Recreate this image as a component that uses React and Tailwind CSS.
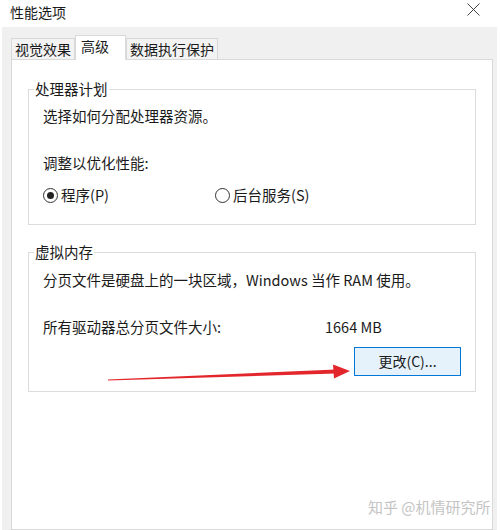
import { useState } from 'react';

const font = "font-['Microsoft_YaHei','Noto_Sans_CJK_SC',sans-serif]";

const Radio = ({ checked, label, onSelect, className = '' }) => (
  <button type="button" onClick={onSelect} className={`flex items-center gap-[3px] h-[20px] ${className}`}>
    <span className="w-[15px] h-[15px] rounded-full border border-[#333] bg-white flex items-center justify-center">
      {checked && <span className="w-[7px] h-[7px] rounded-full bg-[#222]" />}
    </span>
    <span>{label}</span>
  </button>
);

const Group = ({ title, className = '', children }) => (
  <fieldset className={`border border-[#dcdcdc] px-[14px] ${className}`}>
    <legend className="-ml-[9px] px-[1px] leading-[16px]">{title}</legend>
    {children}
  </fieldset>
);

export default function App() {
  const [mode, setMode] = useState('program');
  const tabs = ['视觉效果', '高级', '数据执行保护'];
  const [active, setActive] = useState(1);

  return (
    <div className={`relative w-[500px] h-[530px] overflow-hidden bg-white text-[#1a1a1a] text-[14.5px] ${font}`}>
      {/* Title bar */}
      <div className="h-[27px] flex items-center justify-between pl-[10px] pr-[20px]">
        <span className="text-[14px] leading-[16px] -mt-[3px]">性能选项</span>
        <svg width="13" height="13" viewBox="0 0 13 13" className="-mt-[8px]">
          <path d="M0.5 0.5L12.5 12.5M12.5 0.5L0.5 12.5" stroke="#444" strokeWidth="1" />
        </svg>
      </div>

      {/* Dialog body */}
      <div className="ml-[2px] w-[495px] h-[503px] bg-[#f0f0f0] pl-[9px] pr-[4px] pt-[8px] flex flex-col">
        <div className="flex items-end h-[24px] text-[14px] whitespace-nowrap">
          {tabs.map((t, i) =>
            i === active ? (
              <button
                key={t}
                type="button"
                className="relative z-10 -mb-px h-[25px] pl-[5px] pr-[16px] bg-white border border-b-0 border-[#d9d9d9] leading-[20px] pb-[4px]"
              >
                {t}
              </button>
            ) : (
              <button
                key={t}
                type="button"
                onClick={() => setActive(i)}
                className="h-[21px] px-[3px] bg-[#f3f3f3] border border-b-0 border-[#d9d9d9] leading-[20px]"
              >
                {t}
              </button>
            )
          )}
        </div>

        <div className="flex-1 bg-white border border-[#d9d9d9] px-[16px] pt-[21px]">
          <Group title="处理器计划" className="pb-[19px]">
            <p className="mt-[9px] leading-[20px]">选择如何分配处理器资源。</p>
            <p className="mt-[27px] leading-[20px]">调整以优化性能:</p>
            <div className="mt-[12px] flex">
              <Radio
                className="w-[172px]"
                checked={mode === 'program'}
                label="程序(P)"
                onSelect={() => setMode('program')}
              />
              <Radio checked={mode === 'service'} label="后台服务(S)" onSelect={() => setMode('service')} />
            </div>
          </Group>

          <Group title="虚拟内存" className="mt-[19px] pb-[15px]">
            <p className="mt-[10px] leading-[20px]">分页文件是硬盘上的一块区域，Windows 当作 RAM 使用。</p>
            <div className="mt-[27px] flex leading-[20px]">
              <span className="w-[282px]">所有驱动器总分页文件大小:</span>
              <span>1664 MB</span>
            </div>
            <div className="mt-[10px] flex justify-end">
              <button
                type="button"
                className="w-[107px] h-[29px] bg-[#e5f1fb] border border-[#0078d7] text-[14px]"
              >
                更改(C)...
              </button>
            </div>
          </Group>
        </div>
      </div>

      {/* Red annotation arrow */}
      <svg className="absolute left-0 top-0 pointer-events-none" width="500" height="530">
        <polygon points="108,379.5 336,369.5 336,373.5 108,380.5" fill="#e3262b" />
        <polygon points="333,364.5 350,371 334,378.5" fill="#e3262b" />
      </svg>

      {/* Watermark */}
      <span className="absolute left-[368px] top-[498px] text-[15px] leading-[18px] text-[#c4c4c4] [text-shadow:0_0_1px_#fff]">
        知乎 @机情研究所
      </span>
    </div>
  );
}
